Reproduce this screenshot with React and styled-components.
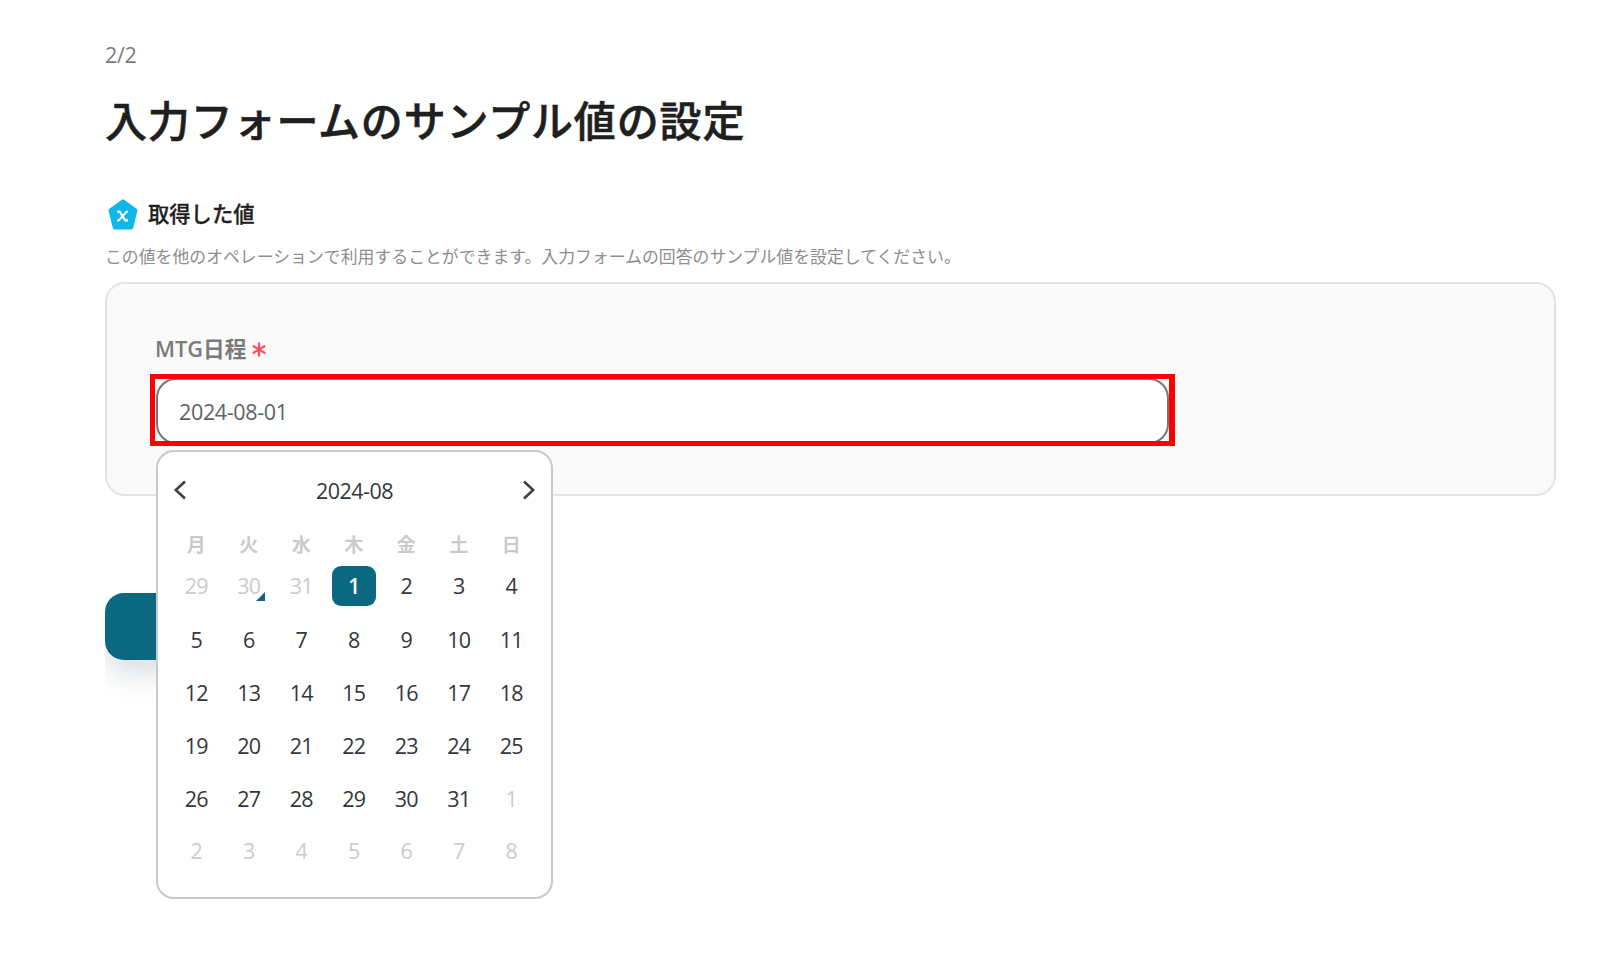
import { useState } from "react";
import styled, { createGlobalStyle, css } from "styled-components";

const GlobalStyle = createGlobalStyle`
  * {
    box-sizing: border-box;
  }

  body {
    margin: 0;
    background: #fff;
    font-family: "Open Sans", "Noto Sans CJK JP", sans-serif;
    overflow: hidden;
  }
`;

const Page = styled.main`
  height: 956px;
  padding: 43px 44px 0 105px;
  display: flex;
  flex-direction: column;
`;

const Step = styled.span`
  height: 24px;
  line-height: 24px;
  font-size: 21.5px;
  letter-spacing: -0.4px;
  color: #7c7c7c;
`;

const Title = styled.h1`
  height: 48px;
  margin: 28px 0 0;
  line-height: 48px;
  font-family: "Noto Sans CJK JP", sans-serif;
  font-size: 42px;
  letter-spacing: 0.85px;
  font-weight: 500;
  -webkit-text-stroke: 0.6px #1f1f1f;
  color: #1f1f1f;
`;

const SectionHeader = styled.header`
  display: flex;
  align-items: center;
  gap: 10px;
  height: 32px;
  margin-top: 55px;
  padding-left: 3px;

  & h2 {
    margin: -2px 0 0;
    line-height: 32px;
    font-family: "Noto Sans CJK JP", sans-serif;
    font-size: 21.3px;
    font-weight: 500;
    -webkit-text-stroke: 0.3px #1f1f1f;
    color: #1f1f1f;
  }
`;

const Description = styled.p`
  height: 24px;
  margin: 14px 0 0;
  line-height: 24px;
  font-family: "Noto Sans CJK JP", sans-serif;
  font-size: 16.87px;
  white-space: nowrap;
  color: #8e8e8e;
`;

const Panel = styled.section`
  height: 214px;
  margin-top: 14px;
  padding: 52px 0 0 49px;
  background: #fafafa;
  border: 2px solid #e1e5e9;
  border-radius: 20px;
`;

const Label = styled.label`
  display: flex;
  align-items: center;
  gap: 6px;
  height: 26px;
  margin-left: -1px;
  line-height: 26px;
  font-size: 21.7px;
  font-weight: 600;
  color: #7a7a7a;
`;

const Field = styled.div`
  position: relative;
  width: 1013px;
  height: 66px;
  margin-top: 16px;
`;

const Input = styled.input`
  display: block;
  width: 100%;
  height: 100%;
  padding: 0 21px;
  font-family: inherit;
  font-size: 21.5px;
  letter-spacing: -0.35px;
  color: #5c6269;
  background: #fff;
  border: 2px solid #777;
  border-radius: 20px;
  outline: none;
`;

const Highlight = styled.div`
  position: absolute;
  top: -4px;
  left: -6px;
  width: 1025px;
  height: 72px;
  border: 5px solid #f00;
  border-right-width: 6px;
  pointer-events: none;
`;

const Calendar = styled.div`
  position: absolute;
  top: 72px;
  left: 0;
  z-index: 1;
  width: 397px;
  height: 449px;
  padding: 16px 13px 0 12px;
  background: #fff;
  border: 2px solid #c9c9c9;
  border-radius: 18px;
`;

const CalendarHeader = styled.div`
  display: flex;
  align-items: center;
  justify-content: space-between;
  height: 44px;
  margin: 0 0 0 1px;
  font-size: 21.5px;
  letter-spacing: -0.5px;
  color: #33373c;
`;

const NavButton = styled.button`
  display: flex;
  padding: 0;
  color: #3a3d42;
  background: none;
  border: none;
`;

const Weekdays = styled.div`
  display: grid;
  grid-template-columns: repeat(7, 52.5px);
  height: 30px;
  margin-top: 17px;
  line-height: 29px;
  font-family: "Noto Sans CJK JP", sans-serif;
  font-size: 19px;
  font-weight: 700;
  text-align: center;
  color: #cbcbcb;
`;

const Days = styled.div`
  display: grid;
  grid-template-columns: repeat(7, 52.5px);
  grid-template-rows: repeat(5, 53.3px) 50px;
  margin-top: 0.6px;
`;

const Day = styled.button`
  position: relative;
  place-self: center;
  width: 44px;
  height: 40px;
  padding: 0;
  font-family: inherit;
  font-size: 21.5px;
  letter-spacing: -0.8px;
  line-height: 38px;
  color: #33373c;
  background: none;
  border: none;
  border-radius: 9px;

  ${({ $outside }) =>
    $outside &&
    css`
      color: #cbcbcb;
    `}

  ${({ $selected }) =>
    $selected &&
    css`
      font-weight: 600;
      color: #fff;
      background: #0a6881;
    `}
`;

const TodayMark = styled.i`
  position: absolute;
  right: 6px;
  bottom: 5px;
  border-left: 9px solid transparent;
  border-bottom: 9px solid #0a6881;
`;

/* the shadow is cut off at the left edge of the column */
const Actions = styled.div`
  height: 150px;
  margin-top: 97px;
  overflow: hidden;
`;

const SubmitButton = styled.button`
  display: block;
  width: 300px;
  height: 67px;
  background: #0a6881;
  border: none;
  border-radius: 19px;
  box-shadow: 0 14px 28px rgba(60, 85, 100, 0.18);
`;

const weekdays = ["月", "火", "水", "木", "金", "土", "日"];

const buildDays = () => {
  const days = [];
  for (let i = 0; i < 42; i++) {
    const date = new Date(2024, 6, 29 + i);
    days.push({
      key: i,
      label: date.getDate(),
      outside: date.getMonth() !== 7,
      today: date.getMonth() === 6 && date.getDate() === 30,
    });
  }
  return days;
};

function ValueIcon() {
  return (
    <svg width="30" height="32" viewBox="0 0 30 32">
      <path
        d="M15 3.2 L27.6 12.2 L23.3 29.5 H6.7 L2.4 12.2 Z"
        fill="#10b8ea"
        stroke="#10b8ea"
        strokeWidth="3.8"
        strokeLinejoin="round"
      />
      <path
        d="M9.3 13.6 H11.8 L17.2 22.4 H20"
        fill="none"
        stroke="#fff"
        strokeWidth="2.2"
        strokeLinejoin="round"
      />
      <path
        d="M20 13.6 H18.6 L11 22.4 H9"
        fill="none"
        stroke="#fff"
        strokeWidth="1.8"
        strokeLinejoin="round"
      />
    </svg>
  );
}

function RequiredIcon() {
  return (
    <svg width="14" height="15" viewBox="0 0 14 15">
      <path
        d="M7 0.5 V14.5 M0.8 3.8 L13.2 11.2 M13.2 3.8 L0.8 11.2"
        stroke="#ff4d61"
        strokeWidth="2.3"
      />
    </svg>
  );
}

function Chevron({ points }) {
  return (
    <svg width="20" height="20" viewBox="0 0 20 20">
      <polyline
        points={points}
        fill="none"
        stroke="currentColor"
        strokeWidth="2.5"
      />
    </svg>
  );
}

function DatePicker({ selected, onSelect }) {
  return (
    <Calendar>
      <CalendarHeader>
        <NavButton aria-label="prev">
          <Chevron points="14,1.5 4.8,10 14,18.5" />
        </NavButton>
        <span>2024-08</span>
        <NavButton aria-label="next">
          <Chevron points="6,1.5 15.2,10 6,18.5" />
        </NavButton>
      </CalendarHeader>
      <Weekdays>
        {weekdays.map((day) => (
          <span key={day}>{day}</span>
        ))}
      </Weekdays>
      <Days>
        {buildDays().map((day) => (
          <Day
            key={day.key}
            $outside={day.outside}
            $selected={!day.outside && day.label === selected}
            onClick={() => !day.outside && onSelect(day.label)}
          >
            {day.label}
            {day.today && <TodayMark />}
          </Day>
        ))}
      </Days>
    </Calendar>
  );
}

function App() {
  const [selected, setSelected] = useState(1);
  const value = `2024-08-${String(selected).padStart(2, "0")}`;

  return (
    <>
      <GlobalStyle />
      <Page>
        <Step>2/2</Step>
        <Title>入力フォームのサンプル値の設定</Title>
        <SectionHeader>
          <ValueIcon />
          <h2>取得した値</h2>
        </SectionHeader>
        <Description>
          この値を他のオペレーションで利用することができます。入力フォームの回答のサンプル値を設定してください。
        </Description>
        <Panel>
          <Label>
            MTG日程
            <RequiredIcon />
          </Label>
          <Field>
            <Input value={value} readOnly />
            <Highlight />
            <DatePicker selected={selected} onSelect={setSelected} />
          </Field>
        </Panel>
        <Actions>
          <SubmitButton />
        </Actions>
      </Page>
    </>
  );
}

export default App;
